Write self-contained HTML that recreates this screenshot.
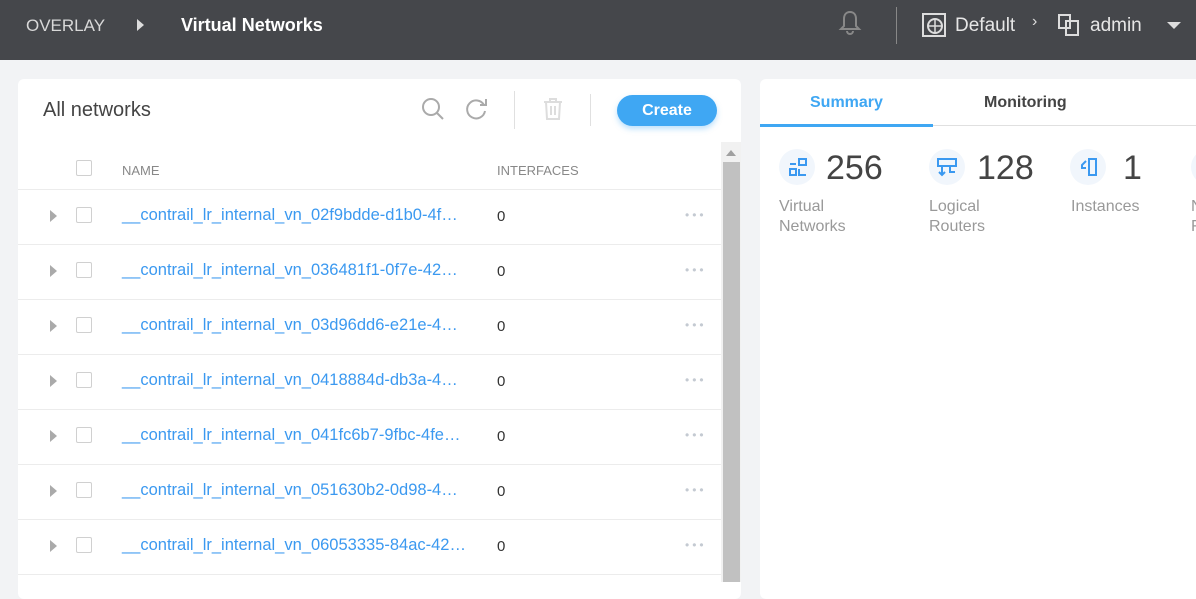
<!DOCTYPE html><html><head><style>
*{box-sizing:border-box;margin:0;padding:0}
body{width:1196px;height:578px;overflow:hidden;background:#f2f3f5;font-family:"Liberation Sans",sans-serif;position:relative}
.hd{position:absolute;left:0;top:0;width:1196px;height:60px;background:#45474b;color:#fff}
.a{position:absolute}
.card{position:absolute;background:#fff;border-radius:6px}
.row{position:absolute;left:18px;width:703px;height:55px;border-bottom:1px solid #ececec}
.cb{position:absolute;left:58px;width:16px;height:16px;border:1px solid #d0d0d0;border-radius:2px;background:#fff}
.tri{position:absolute;left:32px;width:0;height:0;border-top:6px solid transparent;border-bottom:6px solid transparent;border-left:7px solid #aaa}
.nm{position:absolute;left:104px;color:#3b99f0;font-size:16.5px}
.z{position:absolute;left:479px;font-size:15px;color:#333}
.dots{position:absolute;left:667px;color:#c4cad2;font-size:12px;letter-spacing:3px}
.ic{position:absolute;width:36px;height:36px;border-radius:50%;background:#f1f6fc}
.num{position:absolute;font-size:34px;color:#444}
.lbl{position:absolute;font-size:16px;color:#999;line-height:20px}
</style></head><body>
<div class="hd">
<div class="a" style="left:26px;top:16px;font-size:17px;color:#d8d8d8">OVERLAY</div>
<div class="a" style="left:137px;top:19px;border-top:6px solid transparent;border-bottom:6px solid transparent;border-left:7px solid #ddd"></div>
<div class="a" style="left:181px;top:15px;font-size:18px;font-weight:bold">Virtual Networks</div>
<svg class="a" style="left:838px;top:9px" width="24" height="28" viewBox="0 0 24 28"><path d="M12 3c-4 0-6 3-6 7v7l-3 3h18l-3-3v-7c0-4-2-7-6-7zM9 22a3 3 0 0 0 6 0" fill="none" stroke="#888" stroke-width="2"/></svg>
<div class="a" style="left:896px;top:7px;width:1px;height:37px;background:#888"></div>
<svg class="a" style="left:922px;top:13px" width="24" height="24" viewBox="0 0 24 24"><rect x="1" y="1" width="22" height="22" fill="none" stroke="#ddd" stroke-width="2"/><circle cx="13" cy="13" r="7" fill="none" stroke="#ddd" stroke-width="2"/><path d="M6 13h14M13 6v14" stroke="#ddd" stroke-width="1.5"/></svg>
<div class="a" style="left:955px;top:15px;font-size:19px;color:#e6e6e6">Default</div>
<div class="a" style="left:1032px;top:13px;font-size:16px;color:#ddd">›</div>
<svg class="a" style="left:1057px;top:13px" width="26" height="24" viewBox="0 0 26 24"><path d="M2 2h11v6h8v14h-12v-7h-7z M9 8h4v7h-4z" fill="none" stroke="#ddd" stroke-width="2"/></svg>
<div class="a" style="left:1090px;top:15px;font-size:19px;color:#e6e6e6">admin</div>
<div class="a" style="left:1167px;top:22px;border-left:7px solid transparent;border-right:7px solid transparent;border-top:7px solid #ddd"></div>
</div>

<div class="card" style="left:18px;top:79px;width:723px;height:520px"></div>
<div class="a" style="left:43px;top:99px;font-size:20px;color:#444">All networks</div>
<svg class="a" style="left:420px;top:96px" width="26" height="26" viewBox="0 0 26 26"><circle cx="11" cy="11" r="8" fill="none" stroke="#aaa" stroke-width="2"/><path d="M17 17l6 6" stroke="#aaa" stroke-width="2"/></svg>
<svg class="a" style="left:464px;top:96px" width="26" height="26" viewBox="0 0 26 26"><path d="M20 9A9 9 0 1 0 21 15" fill="none" stroke="#aaa" stroke-width="2"/><path d="M16 9h6V3" fill="none" stroke="#aaa" stroke-width="2"/></svg>
<div class="a" style="left:514px;top:91px;width:1px;height:38px;background:#e0e0e0"></div>
<svg class="a" style="left:542px;top:97px" width="22" height="24" viewBox="0 0 22 24"><path d="M2 5h18M8 5V2h6v3M4 5l1 17h12l1-17M9 9v9M13 9v9" fill="none" stroke="#ddd" stroke-width="2"/></svg>
<div class="a" style="left:590px;top:94px;width:1px;height:32px;background:#e0e0e0"></div>
<div class="a" style="left:617px;top:95px;width:100px;height:31px;border-radius:16px;background:#3fa7f3;color:#fff;font-weight:bold;font-size:16px;text-align:center;line-height:31px;box-shadow:0 3px 6px rgba(63,167,243,.35)">Create</div>

<div class="row" style="top:135px"></div>
<div class="cb" style="left:76px;top:160px"></div>
<div class="a" style="left:122px;top:163px;font-size:13px;color:#888">NAME</div>
<div class="a" style="left:497px;top:163px;font-size:13px;color:#888">INTERFACES</div>

<div class="a" style="left:721px;top:142px;width:20px;height:440px;background:#f1f1f1"></div>
<div class="a" style="left:726px;top:150px;border-left:5px solid transparent;border-right:5px solid transparent;border-bottom:6px solid #a0a0a0"></div>
<div class="a" style="left:723px;top:162px;width:17px;height:420px;background:#c1c1c1"></div>

<div class="row" style="top:190px"><div class="tri" style="top:20px"></div><div class="cb" style="top:17px"></div><div class="nm" style="top:16px">__contrail_lr_internal_vn_02f9bdde-d1b0-4f…</div><div class="z" style="top:18px">0</div><div class="dots" style="top:18px">•••</div></div>
<div class="row" style="top:245px"><div class="tri" style="top:20px"></div><div class="cb" style="top:17px"></div><div class="nm" style="top:16px">__contrail_lr_internal_vn_036481f1-0f7e-42…</div><div class="z" style="top:18px">0</div><div class="dots" style="top:18px">•••</div></div>
<div class="row" style="top:300px"><div class="tri" style="top:20px"></div><div class="cb" style="top:17px"></div><div class="nm" style="top:16px">__contrail_lr_internal_vn_03d96dd6-e21e-4…</div><div class="z" style="top:18px">0</div><div class="dots" style="top:18px">•••</div></div>
<div class="row" style="top:355px"><div class="tri" style="top:20px"></div><div class="cb" style="top:17px"></div><div class="nm" style="top:16px">__contrail_lr_internal_vn_0418884d-db3a-4…</div><div class="z" style="top:18px">0</div><div class="dots" style="top:18px">•••</div></div>
<div class="row" style="top:410px"><div class="tri" style="top:20px"></div><div class="cb" style="top:17px"></div><div class="nm" style="top:16px">__contrail_lr_internal_vn_041fc6b7-9fbc-4fe…</div><div class="z" style="top:18px">0</div><div class="dots" style="top:18px">•••</div></div>
<div class="row" style="top:465px"><div class="tri" style="top:20px"></div><div class="cb" style="top:17px"></div><div class="nm" style="top:16px">__contrail_lr_internal_vn_051630b2-0d98-4…</div><div class="z" style="top:18px">0</div><div class="dots" style="top:18px">•••</div></div>
<div class="row" style="top:520px"><div class="tri" style="top:20px"></div><div class="cb" style="top:17px"></div><div class="nm" style="top:16px">__contrail_lr_internal_vn_06053335-84ac-42…</div><div class="z" style="top:18px">0</div><div class="dots" style="top:18px">•••</div></div>

<div class="card" style="left:760px;top:79px;width:450px;height:520px"></div>
<div class="a" style="left:760px;top:125px;width:436px;height:1px;background:#e0e0e0"></div>
<div class="a" style="left:760px;top:124px;width:173px;height:3px;background:#3fa7f3"></div>
<div class="a" style="left:810px;top:94px;font-size:16px;font-weight:bold;color:#3fa7f3">Summary</div>
<div class="a" style="left:984px;top:94px;font-size:16px;font-weight:bold;color:#444">Monitoring</div>

<div class="ic" style="left:779px;top:149px"></div>
<svg class="a" style="left:788px;top:157px" width="20" height="20" viewBox="0 0 20 20"><path d="M2 7h6M2 12h6v6h-6zM11 2h7v6h-7zM11 12v6h7" fill="none" stroke="#3b99f0" stroke-width="2"/></svg>
<div class="num" style="left:826px;top:149px">256</div>
<div class="lbl" style="left:779px;top:197px">Virtual<br>Networks</div>

<div class="ic" style="left:929px;top:149px"></div>
<svg class="a" style="left:936px;top:157px" width="22" height="20" viewBox="0 0 22 20"><path d="M2 2h18v7h-18zM6 9v9M14 9v6h5M3 15l3 3 3-3" fill="none" stroke="#3b99f0" stroke-width="2"/></svg>
<div class="num" style="left:977px;top:149px">128</div>
<div class="lbl" style="left:929px;top:197px">Logical<br>Routers</div>

<div class="ic" style="left:1070px;top:149px"></div>
<svg class="a" style="left:1080px;top:157px" width="18" height="20" viewBox="0 0 18 20"><path d="M9 2h7v16h-7zM6 4l-4 4v3h4" fill="none" stroke="#3b99f0" stroke-width="2"/></svg>
<div class="num" style="left:1123px;top:149px">1</div>
<div class="lbl" style="left:1071px;top:197px">Instances</div>
<div class="ic" style="left:1191px;top:149px"></div>
<div class="lbl" style="left:1191px;top:197px">N<br>F</div>
</body></html>
